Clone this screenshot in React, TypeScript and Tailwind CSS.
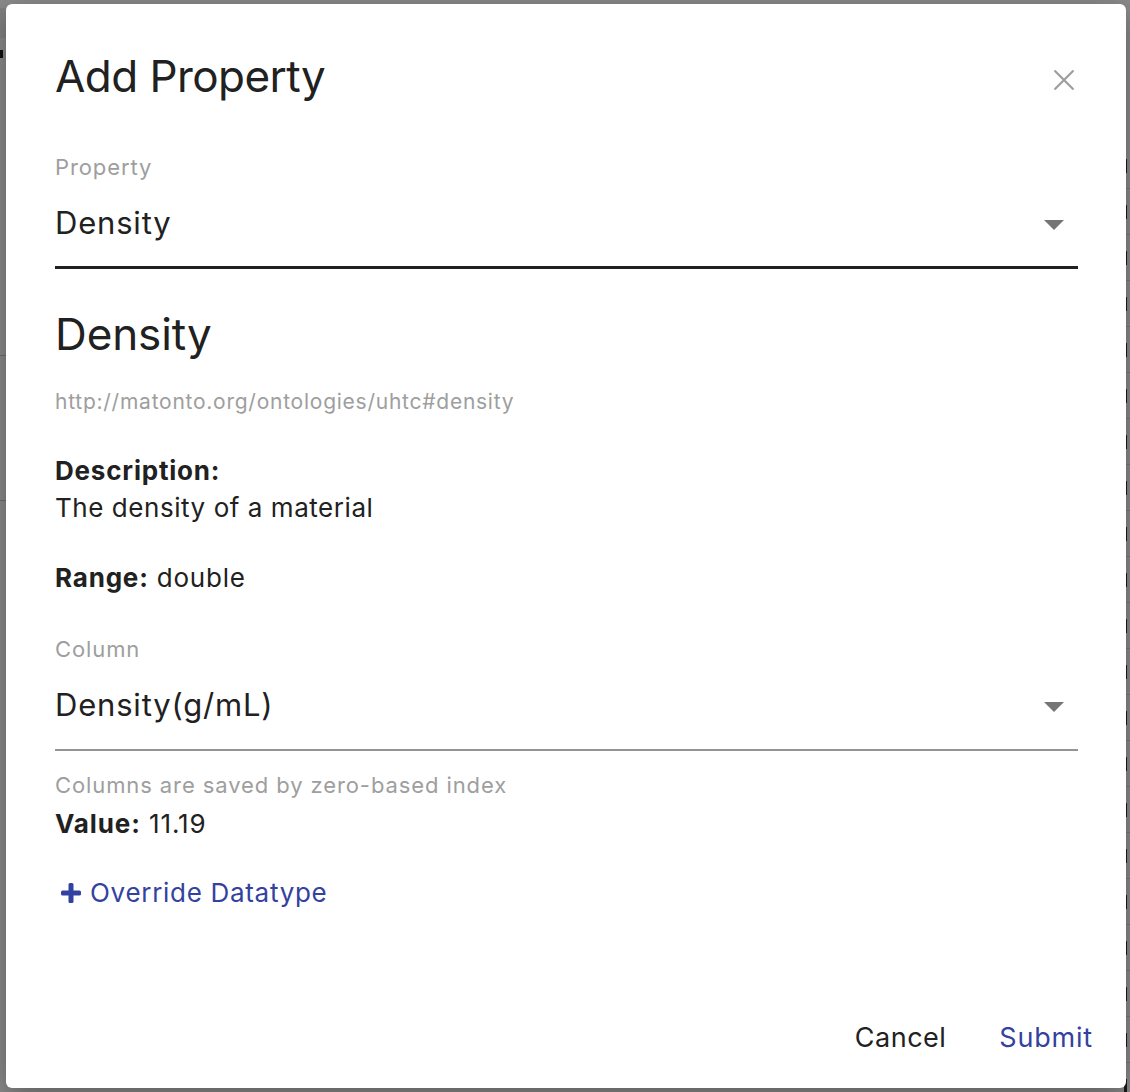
import React from "react";

function Caret() {
  return (
    <svg width="20" height="10" viewBox="0 0 20 10" className="shrink-0">
      <path d="M0 0 L20 0 L10 10 Z" fill="#757575" />
    </svg>
  );
}

export default function App() {
  const rows = Array.from({ length: 24 }, (_, i) => i);
  return (
    <div className="relative w-[1130px] h-[1092px] overflow-hidden bg-[#8b8b8b] font-['Inter','Liberation_Sans',sans-serif]">
      {/* dimmed page behind */}
      <div className="absolute right-0 top-[143px] w-[6px] flex flex-col">
        {rows.map((r) => (
          <div key={r} className="h-[46px] border-b border-[#7a7a7a] flex items-start pt-[16px]">
            <div className="w-[3px] h-[14px] bg-[#1a1a1a] rounded-tl-[3px]" />
          </div>
        ))}
      </div>
      <div className="absolute left-0 top-[8px] w-[6px] h-[30px] bg-[#828282]" />
      <div className="absolute left-0 top-[50px] w-[3px] h-[8px] bg-[#111]" />
      <div className="absolute left-0 top-[355px] w-[6px] h-px bg-[#6e6e6e]" />
      <div className="absolute left-0 top-[500px] w-[6px] h-px bg-[#6e6e6e]" />

      {/* dialog */}
      <div className="absolute left-[6px] top-[4px] w-[1120px] h-[1084px] bg-white rounded-[6px] shadow-[0_8px_30px_rgba(0,0,0,0.35)] flex flex-col text-[#212121]">
        <div className="pl-[49px] pr-[48px] flex flex-col">
          <div className="mt-[46px] flex items-start justify-between">
            <h1 className="text-[44px] leading-[52px] font-normal tracking-[-0.55px]">Add Property</h1>
            <button className="mt-[19px] mr-[3px] w-[22px] h-[22px] flex items-center justify-center">
              <svg width="22" height="22" viewBox="0 0 22 22">
                <path d="M1.5 1.5 L20.5 20.5 M20.5 1.5 L1.5 20.5" stroke="#9e9e9e" strokeWidth="2.2" />
              </svg>
            </button>
          </div>

          <div className="mt-[51px] text-[22px] leading-[28px] tracking-[0.9px] text-[#9e9e9e]">Property</div>
          <div className="mt-[24px] pb-[25px] border-b-[3px] border-[#212121] flex items-center justify-between">
            <span className="text-[31px] leading-[36px] tracking-[0.8px]">Density</span>
            <span className="mr-[14px] mt-[4px]"><Caret /></span>
          </div>

          <h2 className="mt-[39px] text-[44px] leading-[52px] font-normal tracking-[-0.1px]">Density</h2>
          <div className="mt-[29px] text-[21px] leading-[26px] tracking-[0.75px] text-[#9e9e9e]">http://matonto.org/ontologies/uhtc#density</div>

          <div className="mt-[37px] text-[26px] leading-[37px] tracking-[0.8px] font-bold">Description:</div>
          <div className="text-[26px] leading-[37px] tracking-[0.55px]">The density of a material</div>

          <div className="mt-[33px] text-[26px] leading-[37px] tracking-[0.8px]"><span className="font-bold">Range:</span> double</div>

          <div className="mt-[39px] text-[22px] leading-[28px] tracking-[0.9px] text-[#9e9e9e]">Column</div>
          <div className="mt-[24px] pb-[26px] border-b-[2px] border-[#949494] flex items-center justify-between">
            <span className="text-[31px] leading-[36px] tracking-[0.8px]">Density(g/mL)</span>
            <span className="mr-[14px] mt-[4px]"><Caret /></span>
          </div>

          <div className="mt-[20px] text-[22px] leading-[28px] tracking-[0.9px] text-[#9e9e9e]">Columns are saved by zero-based index</div>
          <div className="mt-[6px] text-[26px] leading-[37px] tracking-[0.9px]"><span className="font-bold">Value:</span> 11.19</div>

          <button className="mt-[32px] self-start flex items-center gap-[9px] text-[26px] leading-[37px] tracking-[0.7px] text-[#3342a0]">
            <svg width="20" height="20" viewBox="0 0 20 20" className="ml-[6px]">
              <rect x="7.5" y="0" width="5" height="20" rx="1.5" fill="#3342a0" />
              <rect x="0" y="7.5" width="20" height="5" rx="1.5" fill="#3342a0" />
            </svg>
            <span>Override Datatype</span>
          </button>
        </div>

        <div className="mt-auto mb-[32px] pr-[33px] flex justify-end items-center gap-[53px]">
          <button className="text-[27px] leading-[37px] tracking-[0.5px] text-[#212121]">Cancel</button>
          <button className="text-[27px] leading-[37px] tracking-[0.8px] text-[#3342a0]">Submit</button>
        </div>
      </div>
    </div>
  );
}
